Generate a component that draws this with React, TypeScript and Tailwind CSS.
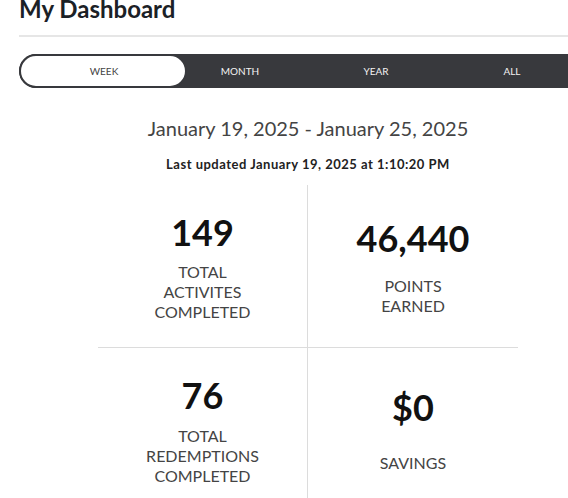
import { useState } from "react"

type Stat = { value: string; lines: string[]; gap: string }

const tabs = ["WEEK", "MONTH", "YEAR", "ALL"]

const stats: Stat[] = [
  { value: "149", lines: ["TOTAL", "ACTIVITES", "COMPLETED"], gap: "mt-[8px]" },
  { value: "46,440", lines: ["POINTS", "EARNED"], gap: "mt-[16px]" },
  { value: "76", lines: ["TOTAL", "REDEMPTIONS", "COMPLETED"], gap: "mt-[9px]" },
  { value: "$0", lines: ["SAVINGS"], gap: "mt-[24px]" },
]

export default function App() {
  const [active, setActive] = useState(0)

  return (
    <div className="w-[568px] h-[498px] overflow-hidden bg-white font-['Lato','Liberation_Sans',sans-serif]">
      <div className="ml-[19px] w-[578px]">
        <h1 className="mt-[-6px] text-[24px] leading-[29px] font-bold text-[#1b2126]">My Dashboard</h1>
        <div className="mt-[12px] h-[2px] bg-[#e6e6e6]" />

        <div className="relative mt-[17px] h-[34px] rounded-[17px] bg-[#38393d] flex pl-[17px]">
          <div
            className="absolute top-0 h-[34px] w-[168px] rounded-[17px] border-2 border-[#38393d] bg-white"
            style={{ left: active === 0 ? 0 : 17 + active * 136 - 16 }}
          />
          {tabs.map((t, i) => (
            <button
              key={t}
              onClick={() => setActive(i)}
              className={`relative w-[136px] h-[34px] text-[10px] leading-[34px] text-center ${
                i === active ? "text-[#444]" : "text-[#f2f2f2]"
              }`}
            >
              {t}
            </button>
          ))}
        </div>

        <div className="mt-[26px] text-center text-[20px] leading-[28px] text-[#444]">
          January 19, 2025 - January 25, 2025
        </div>
        <div className="mt-[14px] text-center text-[13px] leading-[16px] font-bold tracking-[0.5px] text-[#222]">
          Last updated January 19, 2025 at 1:10:20 PM
        </div>

        <div className="mx-auto mt-[13px] w-[420px] grid grid-cols-2">
          {stats.map((s, i) => (
            <div
              key={s.value}
              className={`flex flex-col items-center justify-center text-center h-[162px] ${
                i % 2 === 0 ? "border-r border-[#dcdcdc]" : ""
              } ${i < 2 ? "border-b border-[#dcdcdc] h-[163px]" : ""}`}
            >
              <div className="text-[36px] leading-[44px] font-bold text-[#111]">{s.value}</div>
              <div className={`${s.gap} text-[16px] leading-[20px] text-[#444]`}>
                {s.lines.map((l) => (
                  <div key={l}>{l}</div>
                ))}
              </div>
            </div>
          ))}
        </div>
      </div>
    </div>
  )
}
